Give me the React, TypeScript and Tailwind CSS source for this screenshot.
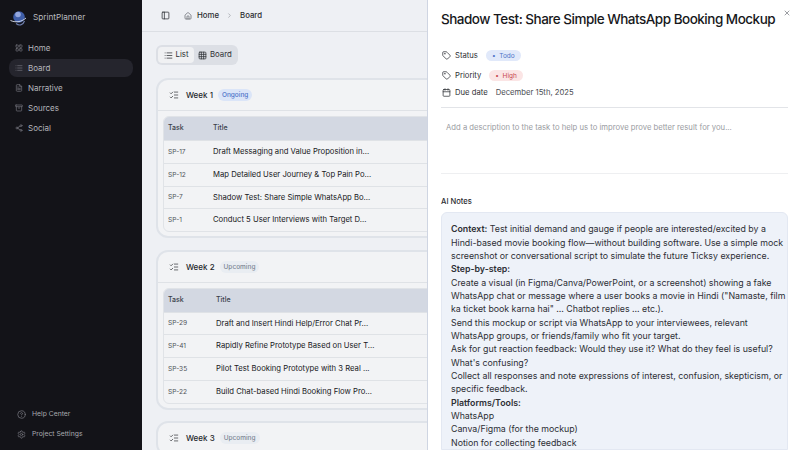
import { Archive, Calendar, ChevronRight, CircleHelp, FileText, Grid3x3, House, LayoutGrid, List, ListChecks, PanelLeft, Settings, Share2, Tag, X } from "lucide-react";
import type { ReactNode } from "react";

const font = { fontFamily: "Inter, 'Noto Sans', sans-serif" };

function Logo() {
  return (
    <svg width="18" height="16" viewBox="0 0 18 16" className="shrink-0">
      <circle cx="9" cy="7" r="5.8" fill="#3f5ea8" />
      <circle cx="8" cy="4.5" r="2.8" fill="#93a6dc" />
      <path d="M0.5 10.5 C5 12.5 11 12.5 16 8" stroke="#dfe4f2" strokeWidth="0.9" fill="none" />
      <path d="M6 13.5 C9 16 13 15.5 14.5 11" stroke="#6f7fae" strokeWidth="1.1" fill="none" />
    </svg>
  );
}

function NavItem({ icon, label, active }: { icon: ReactNode; label: string; active?: boolean }) {
  return (
    <div className={`flex h-[18px] items-center gap-[3px] rounded-lg px-[3px] text-[8px] text-[#b5b6bc] ${active ? "bg-[#25252d]" : ""}`}>
      <span className="flex w-[13px] justify-center text-[#75767e]">{icon}</span>
      {label}
    </div>
  );
}

function Badge({ text, blue }: { text: string; blue?: boolean }) {
  return (
    <span className={`rounded-full px-[4px] py-[2px] text-[6.5px] leading-[8px] ${blue ? "bg-[#dbe5f8] text-[#4f74c8]" : "bg-[#e9edf2] text-[#7d8794]"}`}>
      {text}
    </span>
  );
}

function Week({ title, badge, blue, taskW, rows }: { title: string; badge: string; blue?: boolean; taskW: string; rows: string[][] }) {
  return (
    <div className="mb-[11.5px] w-[340px] shrink-0 rounded-xl border-2 border-[#dfe3e9] bg-[#f2f3f5]">
      <div className="flex h-[31px] items-center gap-[5px] border-b border-[#dfe2e6] px-[11px] text-[8px] font-medium text-[#24262b]">
        <ListChecks size={10} strokeWidth={1.6} className="mr-[2px]" />
        {title}
        <Badge text={badge} blue={blue} />
      </div>
      {rows.length > 0 && (
        <div className="pb-[4px] pl-[5px] pt-[5px]">
          <div className="overflow-hidden rounded-md border border-[#e0e3e7]">
            <div className="flex h-[23px] items-center bg-[#d3d8e2] px-[4px] text-[7px] font-medium text-[#3a3f49]">
              <span className={taskW}>Task</span>
              <span>Title</span>
            </div>
            {rows.map(([id, name]) => (
              <div key={id} className="flex h-[22.75px] items-center border-t border-[#dfe2e6] px-[4px] text-[7.7px] text-[#17181b]">
                <span className={`${taskW} pt-[2px] text-[6.6px] text-[#50535a]`}>{id}</span>
                <span>{name}</span>
              </div>
            ))}
          </div>
        </div>
      )}
    </div>
  );
}

function Meta({ icon, label, children, className }: { icon: ReactNode; label: string; children: ReactNode; className: string }) {
  return (
    <div className={`flex items-center text-[7.7px] text-[#2f3136] ${className}`}>
      <span className="mr-[4px] flex w-[10px] justify-center">{icon}</span>
      <span className="mr-[8px]">{label}</span>
      {children}
    </div>
  );
}

export default function App() {
  return (
    <div style={font} className="relative flex h-[450px] w-[800px] overflow-hidden bg-white">
      <aside className="flex w-[142px] shrink-0 flex-col bg-[#131318] pb-[8px]">
        <div className="flex h-[35px] items-center gap-[5px] pl-[10px] text-[8.2px] text-[#b9babf]">
          <Logo />
          SprintPlanner
        </div>
        <nav className="mt-[4px] flex flex-col gap-[2px] px-[9px]">
          <NavItem icon={<LayoutGrid size={8} />} label="Home" />
          <NavItem active icon={<List size={8} />} label="Board" />
          <NavItem icon={<FileText size={8} />} label="Narrative" />
          <NavItem icon={<Archive size={8} />} label="Sources" />
          <NavItem icon={<Share2 size={8} />} label="Social" />
        </nav>
        <div className="mb-[1px] mt-auto flex flex-col gap-[6px] pl-[17px] text-[6.8px] text-[#a8a9af]">
          <div className="flex h-[14px] items-center gap-[6px]"><CircleHelp size={9} className="text-[#75767e]" />Help Center</div>
          <div className="flex h-[14px] items-center gap-[6px]"><Settings size={9} className="text-[#75767e]" />Project Settings</div>
        </div>
      </aside>

      <main className="flex min-w-0 flex-1 flex-col bg-[#eef0f4]">
        <header className="flex h-[32px] shrink-0 items-center gap-[5px] border-b border-[#dcdfe4] pl-[19px] text-[7.8px] font-medium text-[#2a2c31]">
          <PanelLeft size={9} />
          <House size={8} className="ml-[9px] text-[#55585f]" />
          <span>Home</span>
          <ChevronRight size={7} className="mx-[2px] text-[#8a8d94]" />
          <span>Board</span>
        </header>
        <div className="flex flex-1 flex-col overflow-hidden pl-[14px] pt-[13px]">
          <div className="mb-[13px] flex h-[20px] w-[82px] shrink-0 items-center rounded-md bg-[#dcdfe5] p-[2px] text-[7.8px] text-[#2f3136]">
            <span className="flex h-full w-[36px] items-center justify-center gap-[3px] rounded bg-[#f0f1f3]"><List size={9} />List</span>
            <span className="flex items-center gap-[3px] pl-[4px]"><Grid3x3 size={9} />Board</span>
          </div>
          <Week
            title="Week 1"
            badge="Ongoing"
            blue
            taskW="w-[45px]"
            rows={[
              ["SP-17", "Draft Messaging and Value Proposition in..."],
              ["SP-12", "Map Detailed User Journey & Top Pain Po..."],
              ["SP-7", "Shadow Test: Share Simple WhatsApp Bo..."],
              ["SP-1", "Conduct 5 User Interviews with Target D..."],
            ]}
          />
          <Week
            title="Week 2"
            badge="Upcoming"
            taskW="w-[48px]"
            rows={[
              ["SP-29", "Draft and Insert Hindi Help/Error Chat Pr..."],
              ["SP-41", "Rapidly Refine Prototype Based on User T..."],
              ["SP-35", "Pilot Test Booking Prototype with 3 Real ..."],
              ["SP-22", "Build Chat-based Hindi Booking Flow Pro..."],
            ]}
          />
          <Week title="Week 3" badge="Upcoming" taskW="w-[48px]" rows={[]} />
        </div>
      </main>

      <section className="absolute bottom-0 right-0 top-0 flex w-[373px] flex-col border-l border-[#cfd5e2] bg-white pl-[13px] pr-[12px] text-[#2a2c31]">
        <X size={8} className="absolute right-[9px] top-[9px] text-[#6a6d74]" />
        <h1 className="mt-[9px] whitespace-nowrap text-[13.5px] font-medium leading-[20px] tracking-[-0.5px] text-[#17181b]">Shadow Test: Share Simple WhatsApp Booking Mockup</h1>
        <Meta className="mt-[21px] h-[12px]" icon={<Tag size={9} />} label="Status">
          <span className="rounded-full bg-[#e1e9fa] px-[6px] py-[1.5px] text-[6.5px] leading-[8px] text-[#4f74c8]">• &nbsp;Todo</span>
        </Meta>
        <Meta className="mt-[8px] h-[12px]" icon={<Tag size={9} />} label="Priority">
          <span className="rounded-full bg-[#fbe5e5] px-[6px] py-[1.5px] text-[6.5px] leading-[8px] text-[#c7484f]">• &nbsp;High</span>
        </Meta>
        <Meta className="mt-[5px] h-[12px]" icon={<Calendar size={9} />} label="Due date">
          <span className="text-[#4a4c52]">December 15th, 2025</span>
        </Meta>
        <div className="mt-[9px] border-t border-[#e2e4e8] pl-[5px] pt-[14px] text-[7.7px] leading-[12px] text-[#9a9ca2]">
          Add a description to the task to help us to improve prove better result for you...
        </div>
        <div className="mt-[39px] border-t border-[#eeeff1]" />
        <div className="mt-[22px] text-[7.6px] font-medium leading-[12px] text-[#2a2c31]">AI Notes</div>
        <div className="mt-[4px] flex-1 rounded-t-md border border-[#e3e8f2] bg-[#eef2f9] pl-[9px] pr-[1px] pt-[9px] text-[8.8px] leading-[13.33px] text-[#2d2f35]">
          <strong className="font-semibold">Context:</strong> Test initial demand and gauge if people are interested/excited by a Hindi-based movie booking flow—without building software. Use a simple mock screenshot or conversational script to simulate the future Ticksy experience.
          <br />
          <strong className="font-semibold">Step-by-step:</strong>
          <br />
          Create a visual (in Figma/Canva/PowerPoint, or a screenshot) showing a fake WhatsApp chat or message where a user books a movie in Hindi ("Namaste, film ka ticket book karna hai" ... Chatbot replies ... etc.).
          <br />
          Send this mockup or script via WhatsApp to your interviewees, relevant WhatsApp groups, or friends/family who fit your target.
          <br />
          Ask for gut reaction feedback: Would they use it? What do they feel is useful? What's confusing?
          <br />
          Collect all responses and note expressions of interest, confusion, skepticism, or specific feedback.
          <br />
          <strong className="font-semibold">Platforms/Tools:</strong>
          <br />
          WhatsApp
          <br />
          Canva/Figma (for the mockup)
          <br />
          Notion for collecting feedback
        </div>
      </section>
    </div>
  );
}
